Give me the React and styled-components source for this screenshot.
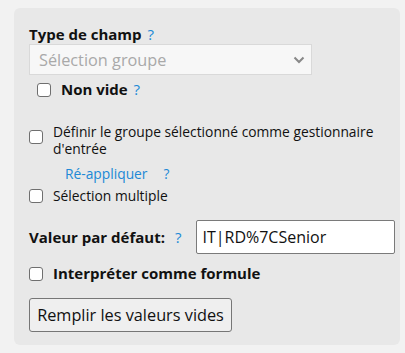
import React from "react";
import styled, { createGlobalStyle } from "styled-components";

const Global = createGlobalStyle`
  html, body { margin: 0; padding: 0; background: #f2f2f2; }
  body { font-family: "Open Sans", "Noto Sans", sans-serif; color: #111; }
`;

const Panel = styled.div`
  margin: 8px 5px 0 14px;
  width: 386px;
  height: 337px;
  box-sizing: border-box;
  background: #e8e8e8;
  border-radius: 6px;
  padding: 16px 0 0 15px;
  display: flex;
  flex-direction: column;
`;

const Label = styled.div`
  font-weight: 700;
  font-size: 15px;
  line-height: 20px;
  display: flex;
  align-items: center;
  gap: ${(p) => p.gap || 6}px;
`;

const Help = styled.span`
  color: #2089d6;
  font-weight: 400;
  font-size: 15px;
  margin-left: ${(p) => p.ml || 0}px;
`;

const Select = styled.div`
  width: 283px;
  height: 31px;
  box-sizing: border-box;
  background: #f7f7f7;
  border: 1px solid #d9d9d9;
  display: flex;
  align-items: center;
  justify-content: space-between;
  padding: 0 6px 0 9px;
  color: #a9a9a9;
  font-size: 16.3px;
`;

const Box = styled.span`
  flex: none;
  width: 14px;
  height: 14px;
  box-sizing: border-box;
  border: 1px solid #6f6f6f;
  border-radius: 3px;
  background: #fff;
`;

const CheckRow = styled.div`
  display: flex;
  align-items: ${(p) => (p.top ? "flex-start" : "center")};
  gap: 10px;
  font-size: ${(p) => (p.bold ? 15 : 13.8)}px;
  line-height: 17px;
  font-weight: ${(p) => (p.bold ? 700 : 400)};
  margin-left: ${(p) => p.indent || 0}px;
  margin-top: ${(p) => p.mt || 0}px;
`;

const Text = styled.span`
  max-width: 330px;
`;

const Link = styled.div`
  margin: ${(p) => p.mt}px 0 0 36px;
  display: flex;
  align-items: center;
  gap: 16px;
  font-size: 13.8px;
  line-height: 19px;
  color: #2089d6;
`;

const ValueRow = styled.div`
  display: flex;
  align-items: center;
  margin-top: 16px;
`;

const Input = styled.div`
  margin-left: 15px;
  width: 199px;
  height: 34px;
  box-sizing: border-box;
  background: #fff;
  border: 1px solid #7a7a7a;
  border-radius: 2px;
  display: flex;
  align-items: center;
  padding-left: 5px;
  font-size: 16px;
  color: #111;
`;

const Button = styled.button`
  align-self: flex-start;
  margin-top: 16px;
  width: 203px;
  height: 34px;
  box-sizing: border-box;
  background: #efefef;
  border: 1px solid #767676;
  border-radius: 3px;
  font-family: "Open Sans", "Noto Sans", sans-serif;
  font-size: 16.3px;
  color: #111;
  padding: 0;
`;

export default function App() {
  return (
    <>
      <Global />
      <Panel>
        <Label>
          Type de champ <Help>?</Help>
        </Label>
        <Select>
          <span>Sélection groupe</span>
          <svg width="12" height="8" viewBox="0 0 12 8">
            <path d="M1.5 1.5 L6 6 L10.5 1.5" fill="none" stroke="#888" strokeWidth="2" />
          </svg>
        </Select>
        <CheckRow bold indent={8} mt={6}>
          <Box />
          <span>
            Non vide <Help ml={2}>?</Help>
          </span>
        </CheckRow>
        <CheckRow top mt={25}>
          <Box style={{ marginTop: 7 }} />
          <Text>Définir le groupe sélectionné comme gestionnaire d'entrée</Text>
        </CheckRow>
        <Link mt={7}>
          <span>Ré-appliquer</span>
          <span>?</span>
        </Link>
        <CheckRow mt={4}>
          <Box />
          <span>Sélection multiple</span>
        </CheckRow>
        <ValueRow>
          <Label gap={10}>
            Valeur par défaut: <Help>?</Help>
          </Label>
          <Input>IT|RD%7CSenior</Input>
        </ValueRow>
        <CheckRow bold mt={11}>
          <Box />
          <span>Interpréter comme formule</span>
        </CheckRow>
        <Button>Remplir les valeurs vides</Button>
      </Panel>
    </>
  );
}
